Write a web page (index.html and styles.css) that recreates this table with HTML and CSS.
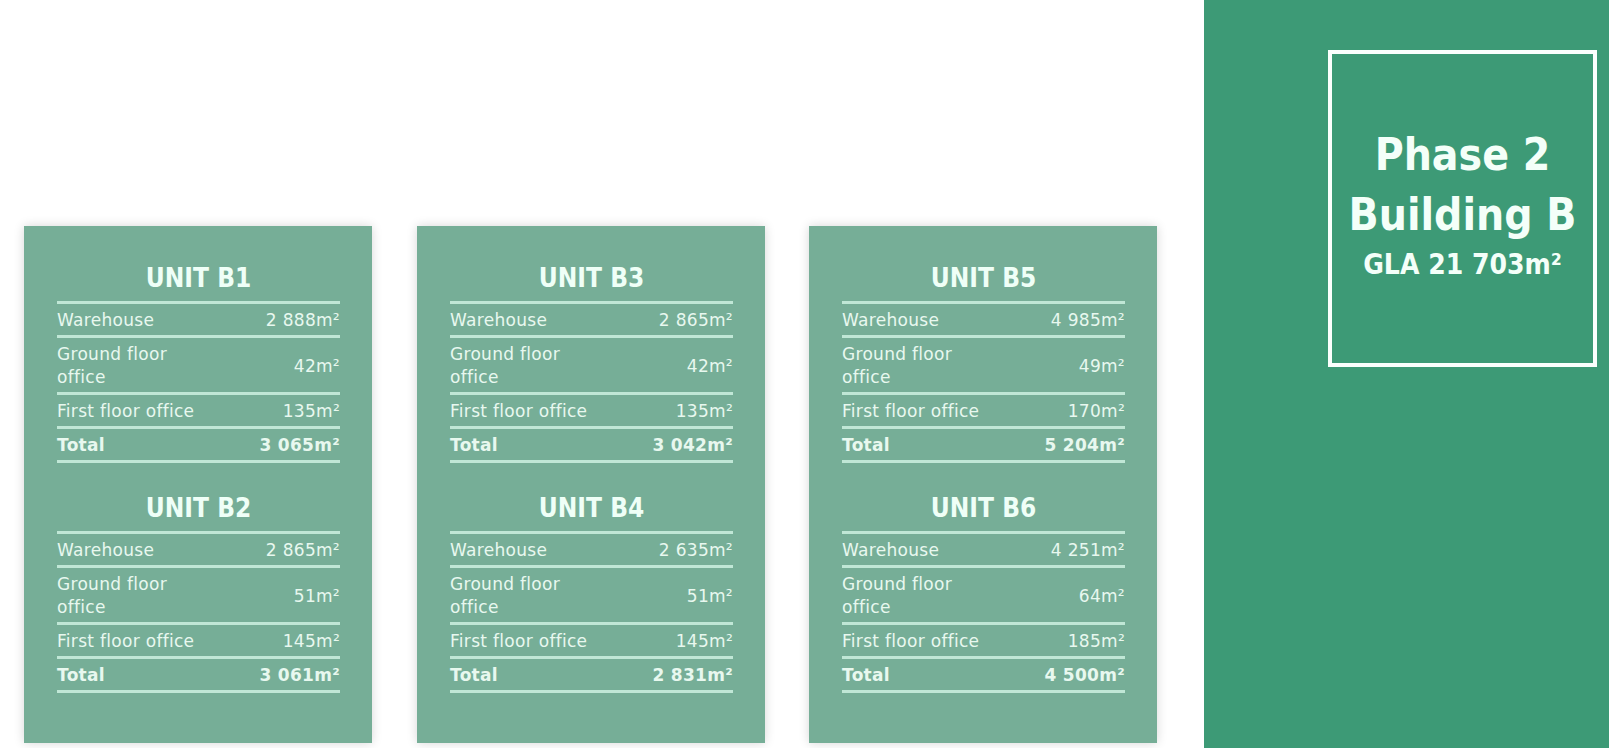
FILE: index.html
```html
<!DOCTYPE html>
<html lang="en">
<head>
  <meta charset="UTF-8">
  <title>Phase 2 Building B</title>
  <link rel="stylesheet" href="styles.css">
</head>
<body>

<div class="units">

  <div class="card">
    <div class="unit">
      <h2>UNIT B1</h2>
      <table>
        <tr><td>Warehouse</td><td class="val">2 888m²</td></tr>
        <tr><td class="wrap">Ground floor office</td><td class="val">42m²</td></tr>
        <tr><td>First floor office</td><td class="val">135m²</td></tr>
        <tr class="total"><td>Total</td><td class="val">3 065m²</td></tr>
      </table>
    </div>
    <div class="unit">
      <h2>UNIT B2</h2>
      <table>
        <tr><td>Warehouse</td><td class="val">2 865m²</td></tr>
        <tr><td class="wrap">Ground floor office</td><td class="val">51m²</td></tr>
        <tr><td>First floor office</td><td class="val">145m²</td></tr>
        <tr class="total"><td>Total</td><td class="val">3 061m²</td></tr>
      </table>
    </div>
  </div>

  <div class="card">
    <div class="unit">
      <h2>UNIT B3</h2>
      <table>
        <tr><td>Warehouse</td><td class="val">2 865m²</td></tr>
        <tr><td class="wrap">Ground floor office</td><td class="val">42m²</td></tr>
        <tr><td>First floor office</td><td class="val">135m²</td></tr>
        <tr class="total"><td>Total</td><td class="val">3 042m²</td></tr>
      </table>
    </div>
    <div class="unit">
      <h2>UNIT B4</h2>
      <table>
        <tr><td>Warehouse</td><td class="val">2 635m²</td></tr>
        <tr><td class="wrap">Ground floor office</td><td class="val">51m²</td></tr>
        <tr><td>First floor office</td><td class="val">145m²</td></tr>
        <tr class="total"><td>Total</td><td class="val">2 831m²</td></tr>
      </table>
    </div>
  </div>

  <div class="card">
    <div class="unit">
      <h2>UNIT B5</h2>
      <table>
        <tr><td>Warehouse</td><td class="val">4 985m²</td></tr>
        <tr><td class="wrap">Ground floor office</td><td class="val">49m²</td></tr>
        <tr><td>First floor office</td><td class="val">170m²</td></tr>
        <tr class="total"><td>Total</td><td class="val">5 204m²</td></tr>
      </table>
    </div>
    <div class="unit">
      <h2>UNIT B6</h2>
      <table>
        <tr><td>Warehouse</td><td class="val">4 251m²</td></tr>
        <tr><td class="wrap">Ground floor office</td><td class="val">64m²</td></tr>
        <tr><td>First floor office</td><td class="val">185m²</td></tr>
        <tr class="total"><td>Total</td><td class="val">4 500m²</td></tr>
      </table>
    </div>
  </div>

</div>

<div class="phase">
  <div class="phase-box">
    <div class="phase-title">Phase 2</div>
    <div class="phase-title">Building B</div>
    <div class="phase-gla">GLA 21 703m²</div>
  </div>
</div>

</body>
</html>
```

FILE: styles.css
```css
body {
  margin: 0;
  height: 748px;
  display: flex;
  background-color: #ffffff;
  font-family: "DejaVu Sans", Verdana, sans-serif;
  overflow: hidden;
}
.units {
  display: flex;
  gap: 44px;
  padding: 226px 47px 5px 24px;
}
.card {
  width: 348px;
  height: 517px;
  box-sizing: border-box;
  padding: 37px 32px 0 33px;
  background-color: #76ae97;
  box-shadow: 0 0 10px rgba(0, 0, 0, 0.16);
  color: #e8f8ef;
}
.card:nth-child(2) {
  margin-left: 1px;
}
.unit + .unit {
  margin-top: 30px;
}
h2 {
  margin: 0 0 8px;
  font-family: "DejaVu Sans Condensed", "DejaVu Sans", sans-serif;
  font-stretch: condensed;
  font-size: 26px;
  line-height: 30px;
  font-weight: bold;
  text-align: center;
  color: #effff7;
}
table {
  width: 100%;
  border-collapse: collapse;
  font-size: 17px;
  line-height: 23px;
  letter-spacing: 0.3px;
}
td {
  border-top: 3px solid #c0e7d6;
  padding: 5px 0 3px;
  vertical-align: middle;
}
tr:last-child td {
  border-bottom: 3px solid #c0e7d6;
}
td.wrap {
  width: 150px;
}
td.val {
  text-align: right;
  white-space: nowrap;
}
.total td {
  font-weight: bold;
}
.phase {
  flex: 1;
  background-color: #3d9a76;
  padding: 50px 12px 0 124px;
}
.phase-box {
  height: 317px;
  box-sizing: border-box;
  border: 4px solid #fbfffd;
  display: flex;
  flex-direction: column;
  align-items: center;
  justify-content: center;
  padding-bottom: 9px;
  color: #f4fff9;
  font-family: "DejaVu Sans Condensed", "DejaVu Sans", sans-serif;
  font-stretch: condensed;
  font-weight: bold;
}
.phase-title {
  font-size: 44px;
  line-height: 60px;
}
.phase-gla {
  font-size: 28px;
  line-height: 36px;
  margin-top: 2px;
}
```
